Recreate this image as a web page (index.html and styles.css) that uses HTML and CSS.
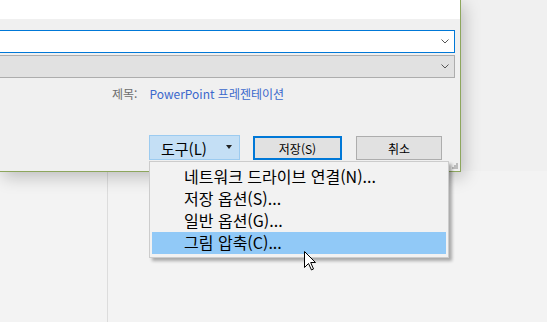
FILE: index.html
```html
<!DOCTYPE html>
<html lang="ko">
<head>
    <meta charset="UTF-8">
    <meta name="viewport" content="width=device-width, initial-scale=1.0">
    <title>다른 이름으로 저장</title>
    <link rel="stylesheet" href="styles.css">
</head>
<body>
    <div class="desktop">
        <!-- window behind the dialog -->
        <div class="backdrop">
            <div class="pane-left"></div>
            <div class="pane-main"></div>
        </div>

        <!-- save dialog, bottom-right part -->
        <div class="dialog">
            <div class="dialog-top"></div>

            <div class="fields">
                <div class="combo combo-active">
                    <svg class="chevron" width="8" height="5" viewBox="0 0 8 5"><path d="M0.5 0.5 L4 4 L7.5 0.5" fill="none" stroke="#555" stroke-width="1"/></svg>
                </div>
                <div class="combo combo-disabled">
                    <svg class="chevron" width="8" height="5" viewBox="0 0 8 5"><path d="M0.5 0.5 L4 4 L7.5 0.5" fill="none" stroke="#555" stroke-width="1"/></svg>
                </div>
            </div>

            <div class="meta-row">
                <span class="meta-label">제목:</span>
                <span class="meta-value">PowerPoint 프레젠테이션</span>
            </div>

            <div class="actions">
                <button class="btn btn-tools">도구(L)<span class="caret"></span></button>
                <button class="btn btn-save">저장(S)</button>
                <button class="btn btn-cancel">취소</button>
            </div>

            <svg class="grip" width="6" height="6" viewBox="0 0 6 6">
                <rect x="4" y="0" width="2" height="2" fill="#bcbcbc"/>
                <rect x="2" y="2" width="2" height="2" fill="#bcbcbc"/>
                <rect x="4" y="2" width="2" height="2" fill="#bcbcbc"/>
                <rect x="0" y="4" width="2" height="2" fill="#bcbcbc"/>
                <rect x="2" y="4" width="2" height="2" fill="#bcbcbc"/>
                <rect x="4" y="4" width="2" height="2" fill="#bcbcbc"/>
            </svg>
        </div>

        <!-- tools dropdown -->
        <ul class="menu">
            <li class="menu-item">네트워크 드라이브 연결(N)...</li>
            <li class="menu-item">저장 옵션(S)...</li>
            <li class="menu-item">일반 옵션(G)...</li>
            <li class="menu-item active">그림 압축(C)...</li>
        </ul>

        <svg class="cursor" width="13" height="20" viewBox="0 0 13 20">
            <path d="M0.5 0.5 L0.5 16.5 L4.5 12.5 L7.5 19 L9.5 18 L6.7 11.5 L11.5 11.5 Z" fill="#fff" stroke="#000" stroke-width="1" stroke-linejoin="miter"/>
        </svg>
    </div>
</body>
</html>
```

FILE: styles.css
```css
* {
    box-sizing: border-box;
}
body {
    margin: 0;
    font-family: "Noto Sans CJK KR", "Noto Sans", sans-serif;
    background-color: #f3f3f3;
    overflow: hidden;
}
.desktop {
    position: relative;
    width: 547px;
    height: 322px;
    overflow: hidden;
}
.backdrop {
    display: flex;
    height: 100%;
    background-color: #f3f3f3;
}
.pane-left {
    width: 108px;
    border-right: 1px solid #dcdcdc;
}
.pane-main {
    flex: 1;
    background: linear-gradient(to bottom, #f0f0f0 0, #f0f0f0 171px, #f3f3f3 171px);
}
.dialog {
    position: absolute;
    top: 0;
    left: 0;
    width: 461px;
    height: 172px;
    background-color: #f0f0f0;
    border-right: 1px solid #8da65d;
    border-bottom: 1px solid #8da65d;
    box-shadow: 3px 5px 16px rgba(0, 0, 0, 0.22);
}
.dialog-top {
    height: 19px;
    background-color: #fff;
}
.fields {
    margin-top: 11px;
    display: flex;
    flex-direction: column;
    gap: 2px;
}
.combo {
    height: 23px;
    margin-right: 5px;
    display: flex;
    align-items: center;
    justify-content: flex-end;
    padding-right: 5px;
    border: 1px solid #adadad;
    border-left: 0;
}
.combo-active {
    background-color: #fff;
    border-color: #0078d7;
}
.combo-disabled {
    background-color: #e1e1e1;
}
.chevron {
    display: block;
}
.meta-row {
    margin-top: 6px;
    padding-left: 112px;
    height: 18px;
    display: flex;
    align-items: center;
    font-size: 12px;
}
.meta-label {
    color: #6d6d6d;
    margin-right: 12px;
}
.meta-value {
    color: #3b68cc;
}
.actions {
    margin-top: 33px;
    display: flex;
    justify-content: flex-end;
    align-items: flex-end;
    gap: 13px;
    padding-right: 18px;
    height: 25px;
}
.btn {
    font-family: "Noto Sans CJK KR", "Noto Sans", sans-serif;
    font-size: 12px;
    color: #000;
    height: 24px;
    padding: 0;
    background-color: #e1e1e1;
    border: 1px solid #adadad;
    display: flex;
    align-items: center;
    justify-content: center;
}
.btn-tools {
    width: 91px;
    height: 25px;
    font-size: 15px;
    justify-content: space-between;
    padding: 1px 7px 0 11px;
    background-color: #c4dff5;
    border-color: #9ccbf0;
}
.caret {
    width: 0;
    height: 0;
    border-left: 3.5px solid transparent;
    border-right: 3.5px solid transparent;
    border-top: 4px solid #222;
    margin-top: -2px;
}
.btn-save {
    width: 89px;
    border: 2px solid #0078d7;
}
.btn-cancel {
    width: 86px;
    margin-left: 1px;
}
.grip {
    position: absolute;
    right: 2px;
    bottom: 2px;
}
.menu {
    position: absolute;
    left: 149px;
    top: 161px;
    width: 300px;
    margin: 0;
    padding: 4px 2px 3px 2px;
    list-style: none;
    background-color: #f2f2f2;
    border: 1px solid #cccccc;
    box-shadow: 3px 3px 3px rgba(0, 0, 0, 0.3);
}
.menu-item {
    height: 22px;
    line-height: 21px;
    padding-left: 32px;
    font-size: 16px;
    color: #000;
    white-space: nowrap;
}
.menu-item.active {
    background-color: #91c9f7;
}
.cursor {
    position: absolute;
    left: 304px;
    top: 251px;
}
```
